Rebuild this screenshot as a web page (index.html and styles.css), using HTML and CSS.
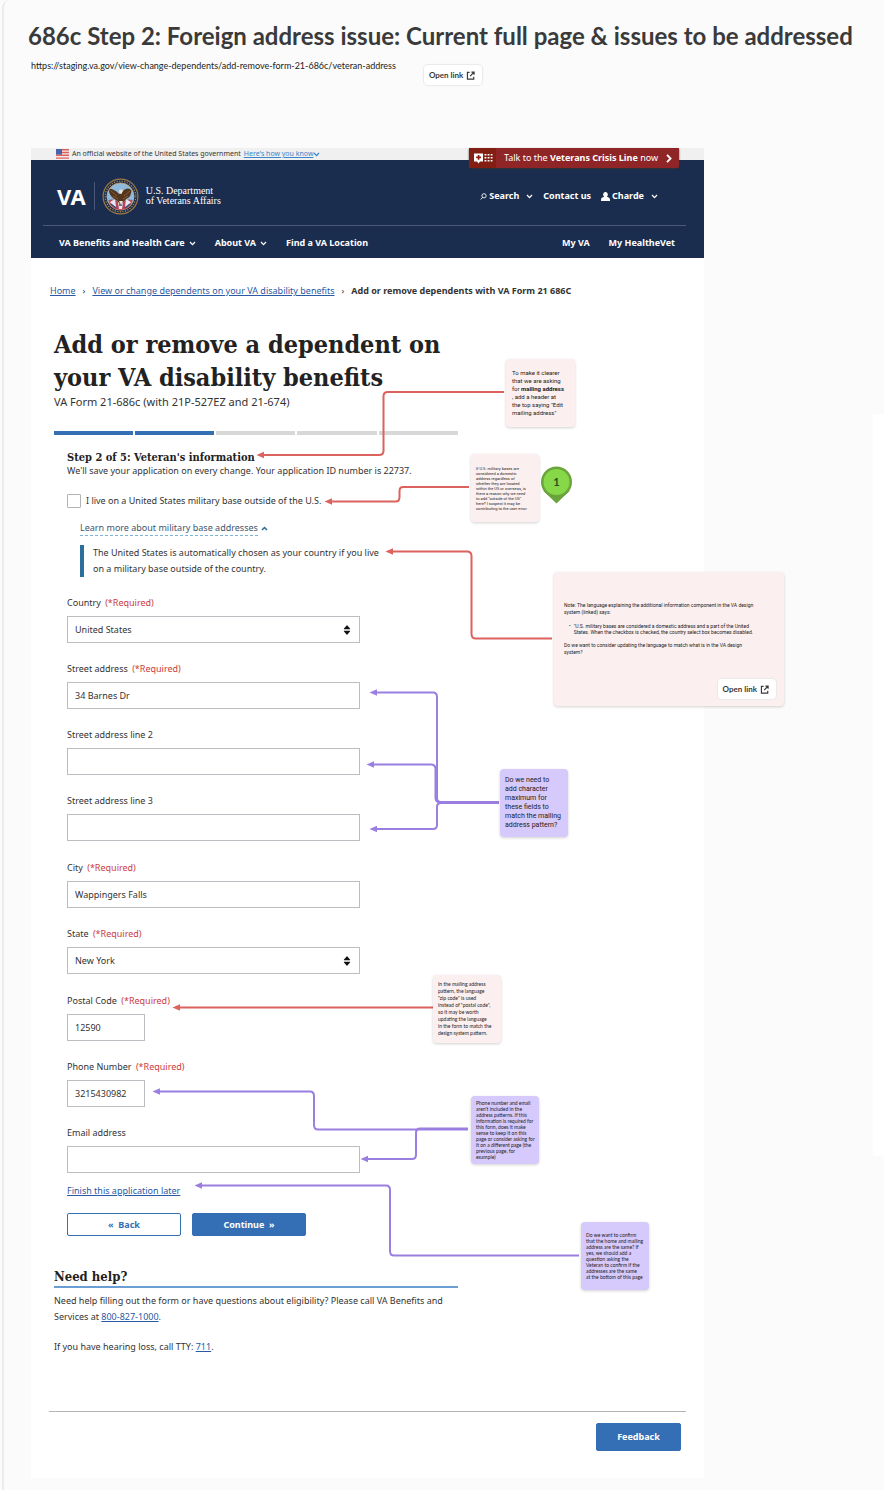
FILE: index.html
```html
<!DOCTYPE html>
<html lang="en">
<head>
<meta charset="utf-8">
<title>686c Step 2: Foreign address issue</title>
<link rel="stylesheet" href="styles.css">
</head>
<body>
<svg class="defs" width="0" height="0" aria-hidden="true">
  <symbol id="chev" viewBox="0 0 8 6"><path d="M1 1.2 4 4.4 7 1.2" fill="none" stroke="currentColor" stroke-width="1.5"/></symbol>
  <symbol id="open" viewBox="0 0 10 10"><path d="M4 1.5H1.6V9H8.6V6.4M6 1.2H9V4.2M8.8 1.4 4.6 5.8" fill="none" stroke="currentColor" stroke-width="1.3"/></symbol>
  <symbol id="sort" viewBox="0 0 8 10"><path d="M1 4.2Q.6 4.2 1 3.6L3.6.5Q4 .1 4.4.5L7 3.6Q7.4 4.2 7 4.2ZM1 5.8Q.6 5.8 1 6.4L3.6 9.5Q4 9.9 4.4 9.5L7 6.4Q7.4 5.8 7 5.8Z" fill="#111"/></symbol>
</svg>
<div class="board">
  <div class="neighbor"></div>
  <header class="board-head">
    <h1 class="board-title">686c Step 2: Foreign address issue: Current full page &amp; issues to be addressed</h1>
    <div class="board-url">
      <span>https://staging.va.gov/view-change-dependents/add-remove-form-21-686c/veteran-address</span>
      <a class="open-link" href="#">Open link <svg width="9" height="9"><use href="#open"/></svg></a>
    </div>
  </header>

  <main class="page">
    <div class="gov">
      <svg class="flag" width="13" height="10" viewBox="0 0 13 10"><path fill="#f6e9e9" d="M0 0h13v10H0z"/><path fill="#d9645f" d="M0 0h13v1.4H0zM0 2.8h13v1.4H0zM0 5.6h13V7H0zM0 8.4h13v1.4H0z"/><path fill="#4a62a8" d="M0 0h6v5.6H0z"/></svg>
      <span>An official website of the United States government</span>
      <a href="#">Here's how you know</a>
      <svg class="blue" width="7" height="5"><use href="#chev"/></svg>
      <a class="crisis" href="#">
        <span class="crisis-icon"><svg width="19" height="11" viewBox="0 0 19 11"><path fill="#fff" d="M0 .5h9v8H6L4.5 10.5 3 8.5H0z"/><path fill="#8b1b12" d="M3.8 2h1.6v1.6H7v1.6H5.4v1.6H3.8V5.2H2.200V3.600h1.600z"/><path stroke="#fff" stroke-width="1.600" stroke-dasharray="1.900 1.200" d="M10.500 1.800h8M10.500 4.800h8M10.500 7.800h8"/></svg></span>
        <span>Talk to the <b>Veterans Crisis Line</b> now</span>
        <svg width="6" height="9" viewBox="0 0 6 9"><path d="M1 .8 4.600 4.500 1 8.200" fill="none" stroke="#fff" stroke-width="1.800"/></svg>
      </a>
    </div>

    <header class="va-head">
      <div class="va-top">
        <div class="logo">
          <span class="va">VA</span>
          <svg width="37" height="37" viewBox="0 0 37 37">
            <circle cx="18.500" cy="18.500" r="18" fill="#9c7a45"/>
            <circle cx="18.500" cy="18.500" r="16.800" fill="#1c2c4c"/>
            <circle cx="18.500" cy="18.500" r="15.300" fill="none" stroke="#b28d55" stroke-width="1.200" stroke-dasharray="1.200 1.400"/>
            <circle cx="18.500" cy="18.500" r="13.600" fill="#8fbadb" stroke="#c9a566" stroke-width=".8"/>
            <path d="M6.500 22Q12 20 18.500 25 25 20 30.500 22 29 31.500 18.500 32 8 31.500 6.500 22Z" fill="#b5475a"/>
            <path d="M8 24l5-3 1 8-3-1zM29 24l-5-3-1 8 3-1zM16 24h5l-1 7h-3z" fill="#e8e6ee"/>
            <path d="M9 26l5 4M28 26l-5 4M17 27h3" stroke="#36507f" stroke-width="1.500"/>
            <path d="M7 14Q7 9 11 11.500 15 13 17 16L19.500 14.500 22 12Q27 9 29.500 12.500 29 19 25 20.500L21 24 18.500 27 15.500 23Q9 20 7 14Z" fill="#54361f"/>
            <path d="M17 12.500Q19 10.500 21 12.500L19.500 16 17.500 15.500ZM17 23l2 4 2-4z" fill="#eee4d2"/>
            <path d="M9 13l6 5M11 18l5 3M28 13l-6 5M26 18l-5 3" stroke="#8d6239" stroke-width=".8"/>
          </svg>
          <span class="dept">U.S. Department<br>of Veterans Affairs</span>
        </div>
        <div class="tools">
          <a href="#" class="gap-s"><svg width="7" height="7" viewBox="0 0 8 8"><circle cx="4.600" cy="3.200" r="2.400" fill="none" stroke="#fff"/><path d="M3 5 .8 7.400" stroke="#fff"/></svg>Search</a>
          <svg class="chev-l" width="7" height="5"><use href="#chev"/></svg>
          <a href="#">Contact us</a>
          <a href="#" class="gap-s user"><svg width="9" height="9" viewBox="0 0 9 9"><path fill="#fff" d="M4.500 0a2.200 2.500 0 0 1 1.300 4.600L8.500 6Q9 6.500 9 9H0Q0 6.500.5 6L3.200 4.600A2.200 2.500 0 0 1 4.500 0z"/></svg>Charde</a>
          <svg class="chev-l" width="7" height="5"><use href="#chev"/></svg>
        </div>
      </div>
      <nav class="va-nav">
        <a href="#">VA Benefits and Health Care <svg width="7" height="5"><use href="#chev"/></svg></a>
        <a href="#">About VA <svg width="7" height="5"><use href="#chev"/></svg></a>
        <a href="#">Find a VA Location</a>
        <a href="#" class="push">My VA</a>
        <a href="#">My HealtheVet</a>
      </nav>
    </header>

    <nav class="crumbs">
      <a href="#">Home</a><span>›</span><a href="#">View or change dependents on your VA disability benefits</a><span>›</span><b>Add or remove dependents with VA Form 21 686C</b>
    </nav>

    <div class="content">
      <h2 class="title">Add or remove a dependent on<br>your VA disability benefits</h2>
      <p class="subtitle">VA Form 21-686c (with 21P-527EZ and 21-674)</p>
      <div class="progress"><i class="on"></i><i class="on"></i><i></i><i></i><i></i></div>

      <form class="form">
        <h3 class="step">Step 2 of 5: Veteran's information</h3>
        <p class="saved">We'll save your application on every change. Your application ID number is 22737.</p>
        <label class="check"><input type="checkbox"> I live on a United States military base outside of the U.S.</label>
        <div class="more">
          <a class="more-link" href="#"><span>Learn more about military base addresses</span><svg width="7" height="5" viewBox="0 0 8 6"><path d="M1 4.800 4 1.800 7 4.800" fill="none" stroke="#2d6f9c" stroke-width="1.900"/></svg></a>
          <p class="more-text">The United States is automatically chosen as your country if you live<br>on a military base outside of the country.</p>
        </div>

        <div class="fields">
          <div class="group">
            <div class="field"><label for="country">Country <em>(*Required)</em></label><div class="select"><select id="country"><option>United States</option></select><svg width="8" height="10"><use href="#sort"/></svg></div></div>
            <div class="field"><label for="st1">Street address <em>(*Required)</em></label><input id="st1" value="34 Barnes Dr"></div>
            <div class="field"><label for="st2">Street address line 2</label><input id="st2"></div>
            <div class="field"><label for="st3">Street address line 3</label><input id="st3"></div>
          </div>
          <div class="group">
            <div class="field"><label for="city">City <em>(*Required)</em></label><input id="city" value="Wappingers Falls"></div>
            <div class="field"><label for="state">State <em>(*Required)</em></label><div class="select"><select id="state"><option>New York</option></select><svg width="8" height="10"><use href="#sort"/></svg></div></div>
          </div>
          <div class="group">
            <div class="field"><label for="zip">Postal Code <em>(*Required)</em></label><input id="zip" class="short" value="12590"></div>
            <div class="field"><label for="tel">Phone Number <em>(*Required)</em></label><input id="tel" class="short" value="3215430982"></div>
            <div class="field"><label for="mail">Email address</label><input id="mail"></div>
          </div>
        </div>

        <a class="later" href="#">Finish this application later</a>
        <div class="actions">
          <button type="button" class="btn back">«&nbsp; Back</button>
          <button type="button" class="btn">Continue &nbsp;»</button>
        </div>
      </form>

      <section class="help">
        <h3>Need help?</h3>
        <p>Need help filling out the form or have questions about eligibility? Please call VA Benefits and<br>Services at <a href="#">800-827-1000</a>.</p>
        <p>If you have hearing loss, call TTY: <a href="#">711</a>.</p>
      </section>
    </div>
    <footer class="foot"><button type="button" class="btn feedback">Feedback</button></footer>
  </main>

  <svg class="wires" width="884" height="1490" viewBox="0 0 884 1490">
    <defs>
      <marker id="ar" markerUnits="userSpaceOnUse" markerWidth="9" markerHeight="8" refX="1" refY="4" orient="auto"><path d="M0 .8 7.500 4 0 7.200Z" fill="#dc625e"/></marker>
      <marker id="ap" markerUnits="userSpaceOnUse" markerWidth="9" markerHeight="8" refX="1" refY="4" orient="auto"><path d="M0 .8 7.500 4 0 7.200Z" fill="#9a7fe0"/></marker>
    </defs>
    <g class="red">
      <path d="M504 392H388Q383.500 392 383.500 396V451Q383.500 455 379 455H263"/>
      <path d="M469 487H403Q399.500 487 399.500 491V497Q399.500 501.500 396 501.500H331"/>
      <path d="M552 638.500H476Q471.500 638.500 471.500 634V556Q471.500 551.500 467 551.500H392"/>
      <path d="M433 1007.500H179"/>
    </g>
    <g class="purple">
      <path d="M499 802H441Q437 802 437 798V697Q437 692.500 433 692.500H376"/>
      <path d="M499 802.500H440Q435.500 802 435.500 798V769Q435.500 764.500 431 764.500H373"/>
      <path d="M499 803H441Q437 803 437 807V825Q437 829 433 829H376"/>
      <path d="M468 1129.500H318Q314 1129.500 314 1125V1096Q314 1091.500 310 1091.500H159"/>
      <path d="M468 1128.500H420Q416 1128.500 416 1133V1155Q416 1159 412 1159H367"/>
      <path d="M579 1255.500H394Q390 1255.500 390 1251V1190Q390 1185.500 386 1185.500H201"/>
    </g>
    <path d="M543.500 491 556.500 503.500 569.500 491Z" fill="#6ba33c"/>
    <circle cx="556.500" cy="482" r="15.500" fill="#6ba33c"/>
    <circle cx="556.500" cy="482" r="13" fill="#86d848"/>
    <text x="556.500" y="486" class="pin">1</text>
  </svg>

  <div class="note n1"><p>To make it clearer<br>that we are asking<br>for <b>mailing address</b><br>, add a header at<br>the top saying "Edit<br>mailing address"</p></div>
  <div class="note n2"><p>If U.S. military bases are<br>considered a domestic<br>address regardless of<br>whether they are located<br>within the US or overseas, is<br>there a reason why we need<br>to add "outside of the US"<br>here? I suspect it may be<br>contributing to the user error</p></div>
  <div class="note n3">
    <p>Note: The language explaining the additional information component in the VA design<br>system (linked) says:</p>
    <ul><li>"U.S. military bases are considered a domestic address and a part of the United<br>States. When the checkbox is checked, the country select box becomes disabled.</li></ul>
    <p>Do we want to consider updating the language to match what is in the VA design<br>system?</p>
    <a class="open-link" href="#">Open link <svg width="9" height="9"><use href="#open"/></svg></a>
  </div>
  <div class="note lilac n4"><p>Do we need to<br>add character<br>maximum for<br>these fields to<br>match the mailing<br>address pattern?</p></div>
  <div class="note n5"><p>In the mailing address<br>pattern, the language<br>"zip code" is used<br>instead of "postal code",<br>so it may be worth<br>updating the language<br>in the form to match the<br>design system pattern.</p></div>
  <div class="note lilac n6"><p>Phone number and email<br>aren't included in the<br>address patterns. If this<br>information is required for<br>this form, does it make<br>sense to keep it on this<br>page or consider asking for<br>it on a different page (the<br>previous page, for<br>example)</p></div>
  <div class="note lilac n7"><p>Do we want to confirm<br>that the home and mailing<br>address are the same? If<br>yes, we should add a<br>question asking the<br>Veteran to confirm if the<br>addresses are the same<br>at the bottom of this page</p></div>
</div>
</body>
</html>
```
FILE: styles.css
```css
* { box-sizing: border-box; }
body { margin: 0; background: #fbfbfb; font-family: Lato, "Liberation Sans", sans-serif; color: #222; }
h1, h2, h3, p, ul { margin: 0; padding: 0; }
svg { display: block; flex: none; }
.defs { position: absolute; }
.board { position: relative; overflow: hidden; padding-bottom: 12px; }
.board::before { content: ""; position: absolute; inset: 0 0 -20px 2px; border-left: 2px solid #ebebeb; border-radius: 8px 0 0 0; }
.neighbor { position: absolute; right: 0; top: 414px; width: 11px; height: 742px; background: #fff; }
.board-head { position: relative; height: 148px; padding: 20px 0 0 28px; }
.board-title { font-size: 24px; line-height: 32px; font-weight: 700; color: #3a3a3a; white-space: nowrap; }
.board-url { display: flex; align-items: flex-start; gap: 28px; padding: 6px 0 0 3px; font-size: 9px; line-height: 16px; white-space: nowrap; }
.open-link { display: inline-flex; align-items: center; gap: 3px; height: 20px; margin-top: 7px; padding: 0 7px 0 5px; font-size: 8px; line-height: 10px; font-weight: 700; color: #3a3a3a; text-decoration: none; background: #fff; border-radius: 4px; box-shadow: 0 0 1px 1px #e9e9e9; white-space: nowrap; }

.page { position: relative; margin: 0 180px 0 31px; background: #fff; font-family: "Noto Sans", sans-serif; font-size: 9px; line-height: 16px; padding-bottom: 27px; color: #333; }
.page a { color: #2b59a3; }
.gov { position: relative; display: flex; align-items: center; gap: 3px; height: 12px; padding-left: 25px; background: #f0f0f0; font-size: 7px; white-space: nowrap; }
.gov .blue { color: #3a86c8; margin-left: -3px; }
.page .gov > a { color: #3a86c8; }
.page .gov .crisis { position: absolute; top: 0; right: 25px; display: flex; align-items: center; justify-content: space-between; width: 210px; height: 20px; padding-right: 7px; font-size: 9px; color: #fff; background: #8f2527; text-decoration: none; border-radius: 0 0 2px 2px; box-shadow: 0 1px 2px #333; }
.crisis-icon { display: flex; align-items: center; height: 20px; padding: 0 3px 0 5px; background: #831f12; }
.va-head { background: #1a2d4f; color: #fff; padding: 0 18px 0 12px; font-weight: 700; white-space: nowrap; }
.page .va-head a { display: flex; align-items: center; gap: 4px; color: #fff; text-decoration: none; }
.va-top { display: flex; justify-content: space-between; align-items: center; height: 66px; padding: 7px 28px 0 14px; border-bottom: 1px solid #4a597a; }
.logo { display: flex; align-items: center; gap: 7px; }
.va { padding-right: 8px; border-right: 1px solid #4a597a; font-size: 22px; line-height: 28px; }
.dept { font-family: "Liberation Serif", serif; font-size: 10px; line-height: 10px; font-weight: 400; }
.tools { display: flex; align-items: center; gap: 10px; }
.tools .chev-l { margin-left: -3px; }
.page .va-head .gap-s { gap: 2px; }
.va-nav { display: flex; align-items: center; gap: 19px; height: 32px; padding: 2px 11px 0 16px; }
.push { margin-left: auto; }
.crumbs { display: flex; gap: 7px; padding: 25px 0 0 19px; white-space: nowrap; }
.content { width: 60%; margin: 29px 0 0 23px; white-space: nowrap; }
.title { font-family: "DejaVu Serif Condensed", "DejaVu Serif", serif; font-size: 25px; line-height: 33px; font-weight: 700; color: #222; }
.subtitle { font-size: 11px; }
.progress { display: flex; gap: 2px; margin-top: 21px; }
.progress i { flex: 1; height: 4px; background: #d8d8d8; }
.progress .on { background: #346eb5; }
.form { padding: 16px 0 0 13px; }
.step { font-family: "DejaVu Serif Condensed", "DejaVu Serif", serif; font-size: 11px; line-height: 14px; color: #222; }
.saved { line-height: 12px; }
.check { display: flex; align-items: center; gap: 5px; margin-top: 17px; line-height: 14px; }
.check input { appearance: none; width: 14px; height: 14px; margin: 0; border: 1px solid #b4b4b4; border-radius: 1px; background: #fff; }
.more { margin: 13px 0 0 13px; }
.page .more-link { display: flex; align-items: center; gap: 3px; color: #3d566e; text-decoration: none; }
.more-link span { line-height: 14px; border-bottom: 1px dashed #7db4d6; }
.more-text { margin-top: 9px; padding-left: 9px; border-left: 4px solid #2d6f9c; line-height: 16px; }
.fields { display: flex; flex-direction: column; gap: 19px; margin-top: 18px; }
.group { display: flex; flex-direction: column; gap: 18px; }
.field { display: flex; flex-direction: column; align-items: flex-start; gap: 5px; }
.field em { margin-left: 2px; font-style: normal; color: #cd3a3d; }
.field input, .field select { width: 100%; height: 27px; padding: 0 7px; border: 1px solid #bcbdc2; border-radius: 0; background: #fff; appearance: none; font: inherit; line-height: 16px; color: #333; }
.field > input, .select { width: 75%; }
.field > .short { width: 78px; }
.select { position: relative; }
.select svg { position: absolute; right: 9px; top: 9px; pointer-events: none; }
.later { display: table; margin-top: 10px; }
.actions { display: flex; gap: 11px; margin-top: 14px; }
.btn { width: 114px; height: 23px; padding: 0; border: 1px solid #346eb5; border-radius: 2px; background: #346eb5; color: #fff; font: 700 9px/16px "Noto Sans", sans-serif; }
.back { background: #fff; color: #346eb5; }
.help { padding-top: 32px; }
.help h3 { margin-bottom: 5px; border-bottom: 2px solid #6b9fd4; font-family: "DejaVu Serif Condensed", "DejaVu Serif", serif; font-size: 13px; line-height: 18px; color: #222; }
.help p + p { margin-top: 14px; }
.foot { margin: 56px 18px 0; padding: 11px 5px 0; border-top: 1px solid #b5b5b9; text-align: right; }
.feedback { width: 85px; height: 28px; }

.wires { position: absolute; left: 0; top: 0; pointer-events: none; }
.wires g { fill: none; stroke-width: 2; }
.red { stroke: #dc625e; }
.purple { stroke: #9a7fe0; }
.red path { marker-end: url(#ar); }
.purple path { marker-end: url(#ap); }
.pin { font: 700 11px Lato, sans-serif; text-anchor: middle; fill: #2d4a20; }
.note { position: absolute; display: flex; flex-direction: column; justify-content: center; width: 68px; height: 68px; padding: 0 5px; border-radius: 4px; background: #fcefef; box-shadow: 0 1px 3px rgba(0, 0, 0, .18); white-space: nowrap; }
.lilac { background: #d6c9fc; }
.n1, .n2, .n3 p, .n3 ul, .n4 { font-family: Roboto, sans-serif; }
.n1 { left: 506px; top: 359px; width: 69px; padding: 0 6px; font-size: 6px; line-height: 8px; }
.n2 { left: 471px; top: 454px; font-size: 4px; line-height: 5px; }
.n3 { left: 554px; top: 572px; width: 230px; height: 134px; justify-content: flex-start; padding: 30px 10px 7px; font-size: 5px; line-height: 7px; }
.n3 ul { margin: 7px 0; padding-left: 5px; line-height: 6px; list-style: none; }
.n3 li { display: flex; gap: 3px; }
.n3 li::before { content: "•"; }
.n3 .open-link { margin: auto -2px 0 auto; }
.n4 { left: 500px; top: 769px; font-size: 7px; line-height: 9px; }
.n5 { left: 433px; top: 975px; font-size: 5px; line-height: 7px; }
.n6 { left: 471px; top: 1096px; font-size: 5px; line-height: 6px; }
.n7 { left: 581px; top: 1222px; font-size: 5px; line-height: 6px; }
```
